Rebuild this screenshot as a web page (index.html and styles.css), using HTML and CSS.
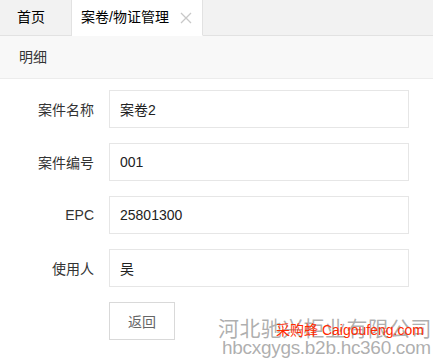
FILE: index.html
```html
<!DOCTYPE html>
<html>
  <head>
    <meta charset="utf-8" />
    <title>案卷/物证管理</title>
    <link rel="stylesheet" href="styles.css">
  </head>
  <body>
    <div class="tabs">
      <div class="tab">首页</div>
      <div class="tab active">
        案卷/物证管理
        <svg class="close" width="12" height="12" viewBox="0 0 12 12">
          <path d="M1 1L11 11M11 1L1 11" stroke="#c8c8c8" stroke-width="1.3" fill="none" />
        </svg>
      </div>
      <div class="tab-rest"></div>
    </div>

    <div class="panel">
      <div class="panel-head">明细</div>
      <div class="panel-body">
        <div class="row">
          <label class="label">案件名称</label>
          <input class="field" type="text" value="案卷2" />
        </div>
        <div class="row">
          <label class="label">案件编号</label>
          <input class="field" type="text" value="001" />
        </div>
        <div class="row">
          <label class="label">EPC</label>
          <input class="field" type="text" value="25801300" />
        </div>
        <div class="row">
          <label class="label">使用人</label>
          <input class="field" type="text" value="吴" />
        </div>
        <div class="row">
          <span></span>
          <div><button class="btn">返回</button></div>
        </div>
      </div>
    </div>

    <div class="wm wm-name">河北驰兴柜业有限公司</div>
    <div class="wm wm-url">hbcxgygs.b2b.hc360.com</div>
    <div class="wm wm-red">采购蜂 Caigoufeng.com</div>
  </body>
</html>
```

FILE: styles.css
```css
body {
  margin: 0;
  background: #fff;
  color: #333;
  font-family: "Liberation Sans", "Noto Sans CJK SC", sans-serif;
  font-size: 14px;
  position: relative;
  height: 358px;
  overflow: hidden;
}
.tabs {
  display: flex;
  height: 36px;
  background: #f2f2f2;
}
.tab {
  height: 35px;
  line-height: 35px;
  padding: 0 17px;
  border-bottom: 1px solid #e2e2e2;
  border-right: 1px solid #e2e2e2;
  color: #000;
  box-sizing: content-box;
}
.tab:first-child {
  width: 37px;
}
.tab.active {
  background: #fff;
  border-bottom-color: #fff;
  padding: 0 10px 0 9px;
  display: flex;
  align-items: center;
  gap: 11px;
}
.tab .close {
  display: block;
}
.tab-rest {
  flex: 1;
  border-bottom: 1px solid #e2e2e2;
}
.panel-head {
  height: 42px;
  line-height: 42px;
  padding-left: 19px;
  background: #f8f8f8;
  border-bottom: 1px solid #ececec;
  color: #333;
}
.panel-body {
  padding-top: 11px;
}
.row {
  display: grid;
  grid-template-columns: 109px 300px;
  align-items: center;
  margin-bottom: 15px;
}
.label {
  text-align: right;
  padding-right: 15px;
  color: #333;
}
.field {
  box-sizing: border-box;
  width: 300px;
  height: 38px;
  border: 1px solid #e6e6e6;
  padding: 0 10px;
  font: inherit;
  color: #222;
  outline: none;
}
.btn {
  box-sizing: border-box;
  width: 66px;
  height: 38px;
  border: 1px solid #d9d9d9;
  background: #fff;
  color: #666;
  font: inherit;
}

/* watermark stamped over the screenshot */
.wm {
  position: absolute;
  white-space: nowrap;
  pointer-events: none;
}
.wm-name {
  left: 218px;
  top: 314px;
  font-family: "Noto Sans CJK SC", sans-serif;
  font-size: 21px;
  line-height: 26px;
  letter-spacing: 0.4px;
  color: rgba(140, 140, 140, 0.7);
}
.wm-url {
  left: 222px;
  top: 338px;
  font-size: 19px;
  line-height: 20px;
  letter-spacing: -0.3px;
  color: rgba(140, 140, 140, 0.7);
}
.wm-red {
  left: 276px;
  top: 321px;
  font-size: 14px;
  line-height: 18px;
  color: #ff2a00;
}
```
